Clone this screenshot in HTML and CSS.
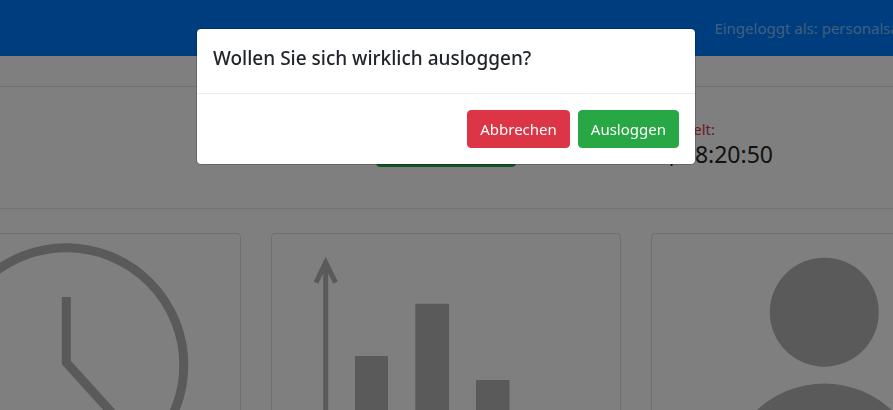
FILE: index.html
```html
<!DOCTYPE html>
<html lang="de">
<head>
<meta charset="utf-8">
<meta name="viewport" content="width=device-width, initial-scale=1">
<title>Ausloggen</title>
<link rel="stylesheet" href="styles.css">
</head>
<body>
<header class="navbar"><span class="user">Eingeloggt als: personalsa</span></header>
<main>
  <section class="status">
    <button class="btn btn-success stamp" type="button" aria-label="Stempeln"></button>
    <div class="last">
      <p class="last-label">Gestempelt:</p>
      <p class="last-time">, 08:20:50</p>
    </div>
  </section>
  <section class="cards">
    <article class="card">
      <svg viewBox="0 0 348 262" aria-hidden="true">
        <g fill="none" stroke="currentColor" stroke-width="9">
          <circle cx="174.3" cy="131.2" r="117.5"/>
          <path d="M174.3 63V128.6L250 212"/>
        </g>
      </svg>
    </article>
    <article class="card">
      <svg viewBox="0 0 348 262" aria-hidden="true">
        <path d="M53.7 28V240M44 48.6L53.7 28.5L63.6 48.6" fill="none" stroke="currentColor" stroke-width="5"/>
        <path d="M83 122H116V240H83ZM143.3 69.7H177V240H143.3ZM204 146H237.5V240H204Z" fill="currentColor"/>
      </svg>
    </article>
    <article class="card">
      <svg viewBox="0 0 348 262" aria-hidden="true">
        <g fill="currentColor">
          <circle cx="172.3" cy="78.2" r="54.5"/>
          <path d="M73.3 248.5a99 99 0 0 1 198 0Z"/>
        </g>
      </svg>
    </article>
  </section>
</main>
<div class="backdrop">
  <div class="modal" role="dialog" aria-modal="true" aria-labelledby="modal-title">
    <div class="modal-header"><h5 id="modal-title">Wollen Sie sich wirklich ausloggen?</h5></div>
    <div class="modal-footer">
      <button class="btn btn-danger" type="button">Abbrechen</button>
      <button class="btn btn-success" type="button">Ausloggen</button>
    </div>
  </div>
</div>
</body>
</html>
```
FILE: styles.css
```css
* { box-sizing: border-box; }

body {
  margin: 0;
  height: 100vh;
  overflow: hidden;
  background: #fff;
  color: #212529;
  font: 15px/24px "Segoe UI", "Noto Sans", sans-serif;
}

p, h5 { margin: 0; }

.navbar {
  display: flex;
  align-items: center;
  height: 56px;
  padding-left: 80%;
  background: #007bff;
  color: rgba(255, 255, 255, 0.5);
  white-space: nowrap;
}

.status {
  display: grid;
  grid-template-columns: 1fr 140px 1fr;
  align-items: end;
  height: 123px;
  margin: 30px 0 24px;
  padding: 0 1px 41px 0;
  border-top: 1px solid rgba(0, 0, 0, 0.1);
  border-bottom: 1px solid rgba(0, 0, 0, 0.1);
}

.stamp { grid-column: 2; height: 38px; }

.last {
  padding-right: 119px;
  text-align: right;
  white-space: nowrap;
}

.last-label { padding-right: 58px; color: #dc3545; }
.last-time { font-size: 23px; line-height: 26px; }

.cards {
  display: grid;
  grid-template-columns: repeat(3, minmax(350px, 1fr));
  gap: 30px;
  justify-content: center;
  padding-right: 1px;
}

.card {
  border: 1px solid rgba(0, 0, 0, 0.125);
  border-radius: 4px;
  color: #b4b4b4;
}

.card svg { display: block; width: 100%; }

.backdrop {
  position: fixed;
  inset: 0;
  padding-right: 1px;
  background: rgba(0, 0, 0, 0.5);
}

.modal {
  max-width: 500px;
  margin: 28px auto;
  background: #fff;
  background-clip: padding-box;
  border: 1px solid rgba(0, 0, 0, 0.2);
  border-radius: 5px;
}

.modal-header {
  padding: 16px 16px 22px;
  border-bottom: 1px solid #e9ecef;
}

.modal-header h5 { font-size: 19px; font-weight: 500; line-height: 26px; }

.modal-footer {
  display: flex;
  justify-content: flex-end;
  gap: 8px;
  padding: 16px;
}

.btn {
  padding: 6px 12px;
  border: 1px solid transparent;
  border-radius: 4px;
  color: #fff;
  font: inherit;
}

.btn-danger { background: #dc3545; border-color: #dc3545; }
.btn-success { background: #28a745; border-color: #28a745; }
```
